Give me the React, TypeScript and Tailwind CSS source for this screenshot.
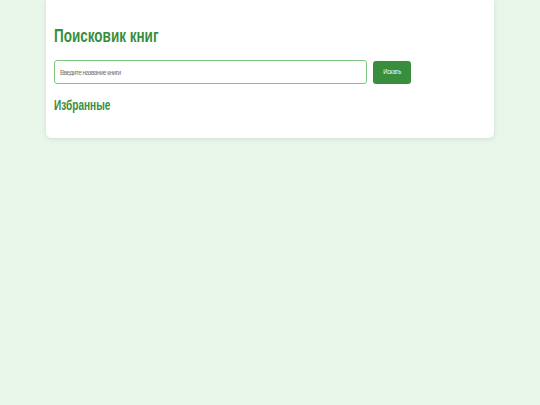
export default function App() {
  return (
    <div className="min-h-screen bg-[#e8f5e9] font-['Liberation_Sans','Arial',sans-serif]">
      <div className="mx-auto w-[448px] rounded-b-[5px] bg-white px-2 pb-[24px] pt-[24px] shadow-[0_1px_4px_rgba(0,0,0,0.1)]">
        <h1 className="text-[18px] font-bold leading-[24px] text-[#388e3c]">
          <span className="inline-block origin-left scale-x-[0.75]">Поисковик книг</span>
        </h1>
        <div className="mt-[12px] flex items-center gap-[6px]">
          <input
            placeholder="Введите название книги"
            className="h-[24px] w-[313px] rounded-[3px] border border-[#81c784] px-[5px] text-[6.5px] tracking-[-0.55px] text-gray-700 outline-none placeholder:text-[#757575]"
          />
          <button className="h-[23px] w-[38px] rounded-[3px] bg-[#388e3c] text-[7px] text-white">
            <span className="inline-block scale-x-[0.8]">Искать</span>
          </button>
        </div>
        <h2 className="mt-[12px] text-[14px] font-bold leading-[18px] text-[#388e3c]">
          <span className="inline-block origin-left scale-x-[0.72]">Избранные</span>
        </h2>
      </div>
    </div>
  );
}
